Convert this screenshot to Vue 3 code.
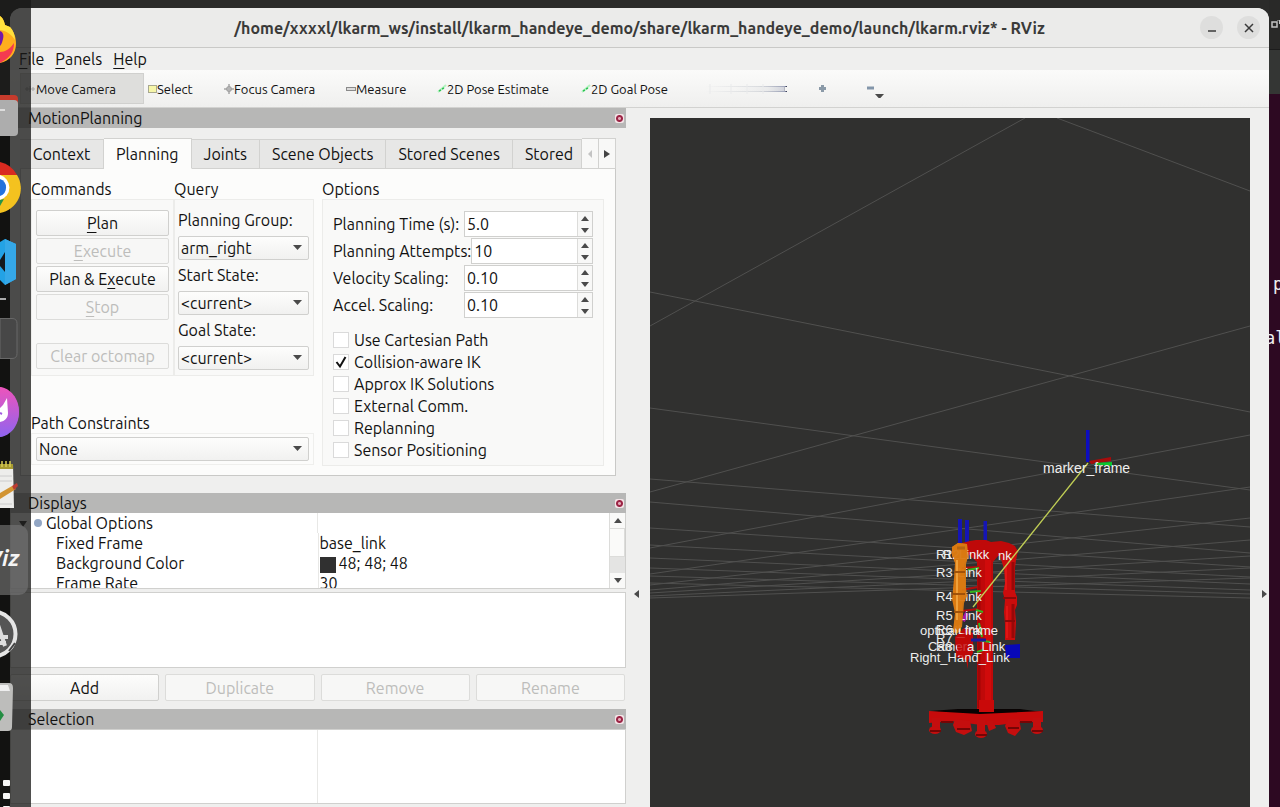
<script setup>
import { ref } from 'vue'

const tools = ['Move Camera', 'Select', 'Focus Camera', 'Measure', '2D Pose Estimate', '2D Goal Pose']
const tabs = ['Context', 'Planning', 'Joints', 'Scene Objects', 'Stored Scenes', 'Stored']
const apps = ['Firefox', 'Files', 'Chrome', 'Code', 'Terminal', 'Cat', 'Notes', 'RViz', 'Updater', 'Trash', 'Show apps']
const options = ref([
  { id: 'time', label: 'Planning Time (s):', value: '5.0' },
  { id: 'attempts', label: 'Planning Attempts:', value: '10' },
  { id: 'velocity', label: 'Velocity Scaling:', value: '0.10' },
  { id: 'accel', label: 'Accel. Scaling:', value: '0.10' }
])
const checks = ref([
  { label: 'Use Cartesian Path', on: false },
  { label: 'Collision-aware IK', on: true },
  { label: 'Approx IK Solutions', on: false },
  { label: 'External Comm.', on: false },
  { label: 'Replanning', on: false },
  { label: 'Sensor Positioning', on: false }
])
const queries = [
  { id: 'group', label: 'Planning Group:', value: 'arm_right' },
  { id: 'start', label: 'Start State:', value: '<current>' },
  { id: 'goal', label: 'Goal State:', value: '<current>' }
]
const gridLines = [
  [650, 326, 1025, 118], [1057, 118, 1250, 191],
  [650, 292, 1250, 412], [650, 408, 1250, 490], [650, 479, 1250, 527], [650, 502, 1250, 553],
  [650, 528, 1250, 567], [650, 545, 1250, 577], [650, 558, 1250, 584], [650, 568, 1250, 590],
  [650, 576, 1250, 594], [650, 583, 1250, 598],
  [650, 492, 1250, 326], [650, 548, 1250, 435], [650, 574, 1250, 487], [650, 585, 1250, 518],
  [650, 590, 1250, 540], [650, 593, 1250, 556], [650, 596, 1250, 568], [650, 598, 1250, 578]
]
</script>

<template>
  <div class="desktop">
    <div class="window">
      <header class="titlebar">
        <h1>/home/xxxxl/lkarm_ws/install/lkarm_handeye_demo/share/lkarm_handeye_demo/launch/lkarm.rviz* - RViz</h1>
        <div class="wm">
          <button aria-label="Minimize"><svg width="10" height="10"><path d="M1 8h8" stroke="#3a3a3a" stroke-width="1.3" /></svg></button>
          <button aria-label="Close"><svg width="10" height="10"><path d="M1 1l8 8M9 1l-8 8" stroke="#3a3a3a" stroke-width="1.5" /></svg></button>
        </div>
      </header>

      <nav class="menubar">
        <button><u>F</u>ile</button>
        <button><u>P</u>anels</button>
        <button><u>H</u>elp</button>
      </nav>

      <div class="toolbar">
        <button v-for="(t, i) in tools" :key="t" :class="['tool', { checked: i === 0 }]">
          <svg v-if="i === 0" width="12" height="12"><path d="M1 6h10M6 3v6M3 4v4M9 4v4" stroke="#a5a5a5" fill="none" /></svg>
          <svg v-else-if="i === 1" width="9" height="12"><rect x=".5" y="2.5" width="8" height="7" fill="#f6f6a8" stroke="#a8a890" /></svg>
          <svg v-else-if="i === 2" width="10" height="12"><path d="M5 1v10M0 6h10" stroke="#a5a5a5" stroke-width="1.5" /><circle cx="5" cy="6" r="2.5" fill="#b5b5b5" stroke="#a0a0a0" /></svg>
          <svg v-else-if="i === 3" width="10" height="12"><rect x=".5" y="4.5" width="9" height="3" fill="#ddd" stroke="#8a8a8a" /></svg>
          <svg v-else width="10" height="12"><path d="M1 9l8-7" stroke="#b4f3c0" stroke-width="2" /><path d="M2 8l2-1M5 6l2-1" stroke="#2fc356" stroke-width="1.5" /></svg>
          <span>{{ t }}</span>
        </button>
        <svg class="slim" width="84" height="14" aria-hidden="true">
          <defs>
            <linearGradient id="fade"><stop offset="0" stop-color="#8890a0" stop-opacity="0" /><stop offset=".65" stop-color="#8890a0" stop-opacity=".25" /><stop offset=".97" stop-color="#7880a0" stop-opacity=".7" /><stop offset="1" stop-color="#202440" /></linearGradient>
          </defs>
          <rect x="0" y="4" width="82" height="1" fill="url(#fade)" /><rect x="30" y="5" width="50" height="4" fill="url(#fade)" opacity=".4" /><rect x="0" y="9" width="82" height="1" fill="url(#fade)" />
          <path d="M5 2v10M26 2v10M42 2v10M58 2v10" stroke="#e9eaeb" />
        </svg>
        <button class="mini" aria-label="Add tool"><svg width="9" height="9"><path d="M4.500 1v7M1 4.500h7" stroke="#8b9aa8" stroke-width="3" /></svg></button>
        <button class="mini" aria-label="Remove tool"><svg width="19" height="18"><path d="M1 8h7" stroke="#8396aa" stroke-width="3" /><path d="M9 14h9l-4.500 5z" fill="#4a4a4a" /></svg></button>
      </div>

      <main class="body">
        <section class="left">
          <div class="dock-title"><span>MotionPlanning</span><button class="shut" aria-label="Close MotionPlanning"></button></div>
          <div class="motion">
            <div class="tabs" role="tablist">
              <button v-for="t in tabs" :key="t" role="tab" :class="['tab', { on: t === 'Planning' }]">{{ t }}</button>
              <button class="scroll off" aria-label="Previous tabs"><svg width="6" height="10"><path d="M5 1v8L1 5z" fill="#c4c4c4" /></svg></button>
              <button class="scroll" aria-label="Next tabs"><svg width="6" height="10"><path d="M0 1v8l6-4z" fill="#444" /></svg></button>
            </div>
            <div class="page">
              <fieldset class="commands">
                <legend>Commands</legend>
                <div class="group stack">
                  <button class="btn"><span><u>P</u>lan</span></button>
                  <button class="btn" disabled><span><u>E</u>xecute</span></button>
                  <button class="btn"><span>Plan &amp; E<u>x</u>ecute</span></button>
                  <button class="btn" disabled><span><u>S</u>top</span></button>
                  <button class="btn clear" disabled>Clear octomap</button>
                </div>
              </fieldset>
              <fieldset class="query">
                <legend>Query</legend>
                <div class="group">
                  <div v-for="q in queries" :key="q.id" class="field">
                    <label :for="q.id">{{ q.label }}</label>
                    <div class="combo">
                      <select :id="q.id"><option>{{ q.value }}</option></select>
                      <svg width="9" height="6"><path d="M0 0h9l-4.500 5z" fill="#4a4a4a" /></svg>
                    </div>
                  </div>
                </div>
              </fieldset>
              <div class="path">
                <label for="path">Path Constraints</label>
                <div class="combo-box">
                  <div class="combo">
                    <select id="path"><option>None</option></select>
                    <svg width="9" height="6"><path d="M0 0h9l-4.500 5z" fill="#4a4a4a" /></svg>
                  </div>
                </div>
              </div>
              <fieldset class="options">
                <legend>Options</legend>
                <div class="group">
                  <div v-for="o in options" :key="o.id" class="row">
                    <label :for="o.id">{{ o.label }}</label>
                    <div class="spin">
                      <input :id="o.id" v-model="o.value" type="text">
                      <div class="steps">
                        <button :aria-label="'Increase ' + o.label"><svg width="8" height="5"><path d="M0 5h8L4 0z" fill="#4a4a4a" /></svg></button>
                        <button :aria-label="'Decrease ' + o.label"><svg width="8" height="5"><path d="M0 0h8L4 5z" fill="#4a4a4a" /></svg></button>
                      </div>
                    </div>
                  </div>
                  <div class="checks">
                    <label v-for="c in checks" :key="c.label">
                      <input v-model="c.on" type="checkbox">
                      <svg width="16" height="16"><rect x=".5" y=".5" width="15" height="15" fill="#fff" stroke="#dadada" /><path v-if="c.on" d="M3.500 8l3.500 4.500L12.500 3" fill="none" stroke="#111" stroke-width="2" /></svg>
                      <span>{{ c.label }}</span>
                    </label>
                  </div>
                </div>
              </fieldset>
            </div>
          </div>

          <div class="dock-title"><span>Displays</span><button class="shut" aria-label="Close Displays"></button></div>
          <div class="tree">
            <table>
              <colgroup><col class="name"><col></colgroup>
              <tbody>
                <tr><td class="root"><svg width="28" height="12"><path d="M1 4h8L5 10z" fill="#333" /><circle cx="20" cy="6" r="4" fill="#92a6c4" /></svg>Global Options</td><td></td></tr>
                <tr><td>Fixed Frame</td><td>base_link</td></tr>
                <tr><td>Background Color</td><td><i class="swatch"></i>48; 48; 48</td></tr>
                <tr><td>Frame Rate</td><td>30</td></tr>
              </tbody>
            </table>
            <div class="vbar">
              <button aria-label="Scroll up"><svg width="8" height="5"><path d="M0 5h8L4 0z" fill="#4a4a4a" /></svg></button>
              <div class="thumb"></div>
              <button aria-label="Scroll down"><svg width="8" height="5"><path d="M0 0h8L4 5z" fill="#4a4a4a" /></svg></button>
            </div>
          </div>
          <div class="desc"></div>
          <div class="actions">
            <button class="btn">Add</button>
            <button class="btn" disabled>Duplicate</button>
            <button class="btn" disabled>Remove</button>
            <button class="btn" disabled>Rename</button>
          </div>

          <div class="dock-title"><span>Selection</span><button class="shut" aria-label="Close Selection"></button></div>
          <div class="selection"><div></div><div></div></div>
        </section>

        <button class="splitter" aria-label="Collapse left panel"><svg width="5" height="8"><path d="M5 0v8L0 4z" fill="#4a4a4a" /></svg></button>

        <div class="view">
          <svg viewBox="650 118 600 689" preserveAspectRatio="xMidYMin slice">
            <g stroke="#50504f" stroke-width="1">
              <line v-for="(l, i) in gridLines" :key="i" :x1="l[0]" :y1="l[1]" :x2="l[2]" :y2="l[3]" />
            </g>
            <g fill="#1515b5">
              <rect x="958" y="519" width="4" height="24" /><rect x="965" y="520" width="4" height="23" /><rect x="983.500" y="521" width="3.500" height="22" />
              <path d="M1005 645l15-1v14h-14z" fill="#0808b8" />
            </g>
            <!-- left arm -->
            <path d="M1000 547l14-1 4 5-2 9-1 8v24l2 5v8l-2 5 1 12-1 18h-10l0-16-1-12 1-12-2-7 2-10-1-14-3-10z" fill="#cb0c0c" />
            <path d="M1006 566v24M1007 606v32" stroke="#e01515" stroke-width="2" />
            <path d="M1013 562v28M1013 604v34" stroke="#980808" stroke-width="3" />
            <path d="M1003 598h13M1005 621h10" stroke="#8b0808" stroke-width="2" />
            <!-- torso and column -->
            <path d="M962 543l8-2 6-1h10l5 2 10-1 8 2 6 3 3 6-6 6-14-2-5 6v148h-16v-148l-9-8-8-6z" fill="#bf0909" />
            <path d="M979 568v140" stroke="#a00606" stroke-width="3" />
            <path d="M988 560v150" stroke="#d00b0b" stroke-width="6" />
            <!-- right arm -->
            <path d="M952 547l6-4 9 1 1 13-4 7 1 24 1 8-4 7-1 28-5 3-3-3 2-18-3-14 2-20 1-16-3-7z" fill="#d97912" />
            <path d="M955 637l9-9 9 5v20l-5 8v8l-2-9-10-3z" fill="#bd0808" />
            <g stroke="#b00d0d" stroke-width="2"><path d="M962 568l16-1M962 590l16-3M962 611l16-2M962 630l16-1" /></g>
            <g stroke="#33b51f" stroke-width="2"><path d="M968 570l11-2M970 592l11-1M976 610l7 2M979 623l3 14M978 640l12 2M977 652l6-2" /></g>
            <path d="M967 613l-4 8" stroke="#a517a5" stroke-width="4" />
            <path d="M971 640h15" stroke="#1a1a9d" stroke-width="3" />
            <!-- base -->
            <path d="M930 711l28-2h62l22 3-60 5z" fill="#080202" />
            <path d="M929 711l51 3 63-3v11l-22 0-22 3h-18l-30-4-22 2z" fill="#c70b0b" />
            <path d="M979 700h15v12h-15z" fill="#c90909" />
            <g fill="#c40e0e">
              <rect x="932" y="718" width="8" height="12" /><ellipse cx="935" cy="730" rx="6" ry="4" />
              <rect x="1033" y="718" width="8" height="12" /><ellipse cx="1037" cy="730" rx="6" ry="4" />
              <rect x="977" y="720" width="8" height="13" /><ellipse cx="981" cy="734" rx="6" ry="4" />
              <path d="M955 719l15 2 2 10-8 4-8-3-3-7zM1008 719l11 0 2 10-6 7-7-3-3-7zM986 721h7l3 7-7 3z" />
            </g>
            <path d="M930 731h11M1032 731h11M976 735h11M957 729h13M1008 728h11M941 722h12M1020 722h12" stroke="#750505" stroke-width="2" />
            <path d="M973 607L1088 463" stroke="#c1cf55" stroke-width="1.300" />
            <rect x="1086" y="430" width="3.500" height="32" fill="#0d0dc0" />
            <path d="M1089 461l22-4v4l-20 3z" fill="#a80c0c" /><path d="M1094 463l18-1v4l-14-1z" fill="#0cc52c" />
            <g class="frames">
              <text x="1043" y="473" class="marker">marker_frame</text>
              <text x="936" y="559">R1</text><text x="943" y="559">R2</text>
              <text x="959" y="559">Linkk</text><text x="998" y="560">nk</text>
              <text x="936" y="577">R3</text><text x="958" y="577">Link</text>
              <text x="936" y="601">R4</text><text x="958" y="601">Link</text>
              <text x="936" y="620">R5</text><text x="958" y="620">Link</text>
              <text x="936" y="634">R6</text><text x="936" y="643">R7</text><text x="958" y="634">Link</text>
              <text x="920" y="635">optical_frame</text>
              <text x="936" y="651">R8</text><text x="928" y="651">Camera_Link</text>
              <text x="910" y="662">Right_Hand_Link</text>
            </g>
            <path d="M952 547l6-4 9 1 1 13-2 7v24l1 8-3 7-2 24-5 3-3-3 2-14-3-14 2-20 1-16-3-7z" fill="#d97912" opacity=".95" />
            <path d="M957 560v60" stroke="#efa03a" stroke-width="2" />
            <path d="M954 572h11M953 594h12M954 612h9" stroke="#a05209" stroke-width="2" />
            <path d="M957 548h8" stroke="#b56510" stroke-width="3" />
            <path d="M957 635l8-2 3 9-3 16-5-1-3-9z" fill="#c00808" opacity=".8" />
          </svg>
        </div>
        <button class="splitter right" aria-label="Collapse right panel"><svg width="5" height="8"><path d="M0 0v8l5-4z" fill="#4a4a4a" /></svg></button>
      </main>
    </div>

    <aside class="terminal">
      <div class="termbar"><svg width="11" height="9"><rect x="3" y="2" width="5" height="5" fill="none" stroke="#c4c4c4" stroke-width="1.500" /><path d="M8 0h3M10.500 0v4" stroke="#c4c4c4" /></svg></div>
      <div class="termtabs"></div>
      <pre><span>p</span>
<span>al</span></pre>
    </aside>

    <nav class="launcher" aria-label="Applications">
      <button v-for="(a, i) in apps" :key="a" :aria-label="a">
        <svg width="31" height="75" viewBox="0 0 31 75">
          <g v-if="i === 0">
            <path d="M0 16c2 1 4 4 5 9l5 2c4 5 6 10 6 17 0 9-6 17-16 19z" fill="#ffae1d" />
            <path d="M0 16c2 1 4 4 5 9l5 2c3 3 5 8 5 13-3-5-8-9-15-10z" fill="#ffe03d" />
            <path d="M0 52c5 0 10-3 14-9 0 9-4 15-14 20z" fill="#f43a50" />
            <path d="M0 31c3 1 4 4 3 8-1 4-2 6-3 7z" fill="#7418a8" />
          </g>
          <g v-else-if="i === 1">
            <path d="M0 20h14q4 0 4 4v8H0z" fill="#c63b2c" /><path d="M0 25h14q4 0 4 4v28q0 4-4 4H0z" fill="#adadad" /><path d="M0 35h5" stroke="#ddd" stroke-width="2" />
          </g>
          <g v-else-if="i === 2">
            <path d="M0 12a25 25 0 0 1 17 13L0 26z" fill="#d92a20" /><path d="M0 25h17a25 25 0 0 1-17 38z" fill="#f4c21f" /><path d="M0 25a13 13 0 0 1 0 25z" fill="#fff" /><path d="M0 29a9 9 0 0 1 0 17z" fill="#2372dc" /><path d="M0 50l4-1L0 56z" fill="#249448" />
          </g>
          <g v-else-if="i === 3">
            <path d="M0 17l5-3 11 5v35L5 60l-5-5z" fill="#23a2e5" /><path d="M0 35l5-8v20l-5-6z" fill="#15191c" /><path d="M5 14l11 5v35L5 60z" fill="#35a8e8" /><path d="M0 74h6" stroke="#aaa" stroke-width="2" />
          </g>
          <g v-else-if="i === 4"><path d="M0 18.500h12q5 0 5 5v30q0 5-5 5H0z" fill="#474747" stroke="#686868" /></g>
          <g v-else-if="i === 5">
            <defs><linearGradient id="pink" x2="0" y2="1"><stop stop-color="#ed54bb" /><stop offset="1" stop-color="#8f64f0" /></linearGradient></defs>
            <path d="M0 12a26 26 0 0 1 0 50z" fill="#b85ce0" /><path d="M0 12c10 1 19 11 19 25S10 61 0 62z" fill="url(#pink)" /><path d="M0 33l3-3 4-7 1 15c0 5-3 8-8 9z" fill="#fff" /><path d="M0 38l2 1" stroke="#a05ae0" stroke-width="2" />
          </g>
          <g v-else-if="i === 6">
            <path d="M0 14h13l1 44H0z" fill="#ededeb" /><path d="M0 14h13v5H0z" fill="#a79b32" /><path d="M2 11v6M6 11v6M10 11v6" stroke="#d8cd55" stroke-width="1.500" /><path d="M0 26h12M0 31h12M0 54h12" stroke="#ccc" /><path d="M0 43l12-7 4 3L0 49z" fill="#d29432" /><path d="M12 36l5-3 1 3-4 4z" fill="#b93b32" />
          </g>
          <g v-else-if="i === 7"><rect x="-10" y="0" width="38" height="70" rx="9" fill="#737373" opacity=".65" /><text x="-13" y="41" class="viz">Viz</text></g>
          <g v-else-if="i === 8"><circle cx="-7" cy="34" r="22.500" fill="#555" stroke="#e5e5e5" stroke-width="4" /><path d="M-9 42L-3 22 5 46M-8 37H8M0 43h6" fill="none" stroke="#ddd" stroke-width="4" /><path d="M9 51l6-8" stroke="#444" stroke-width="2" /></g>
          <g v-else-if="i === 9"><path d="M0 8h9q4 0 4 5l-1 39q0 4-4 4H0z" fill="#bdbdbb" /><path d="M0 10h8l2 6H0z" fill="#eee" /><path d="M0 35l4 5-4 6z" fill="#238d42" /></g>
          <g v-else fill="#f4f4f4"><rect x="3" y="30" width="7" height="6" rx="1" /><rect x="3" y="43" width="7" height="6" rx="1" /><rect x="3" y="56" width="7" height="6" rx="1" /></g>
        </svg>
      </button>
    </nav>
  </div>
</template>

<style>
body { margin: 0; background: #121211; }
</style>

<style scoped>
* { box-sizing: border-box; }
.desktop { position: relative; display: grid; grid-template-columns: minmax(0, 1fr) 11px; height: 100vh; padding-left: 10px; overflow: hidden; background: linear-gradient(#2b2b2a 130px, #000 130px); font: 16px/20px Ubuntu, "Noto Sans", sans-serif; color: #111; }
button, input, select { font: inherit; color: inherit; margin: 0; padding: 0; border: 0; background: none; border-radius: 0; }
button { display: flex; align-items: center; justify-content: center; }
svg { display: block; flex: none; }
u { text-underline-offset: 3px; }
.window { display: flex; flex-direction: column; min-width: 0; min-height: 0; margin-top: 8px; border-radius: 12px 12px 0 0; overflow: hidden; background: #efefee; }
.titlebar { position: relative; display: flex; align-items: center; justify-content: center; height: 40px; flex: none; border-bottom: 1px solid #c9c9c7; background: #ebebea; }
h1 { margin: 0; font-size: 16px; line-height: 24px; font-weight: 700; color: #3a3a39; white-space: nowrap; }
.wm { position: absolute; right: 9px; top: 8px; display: flex; gap: 14px; }
.wm button { width: 23px; height: 23px; border-radius: 50%; background: #dededd; }
.menubar { display: flex; gap: 11px; height: 22px; flex: none; padding-left: 9px; }
.toolbar { display: grid; grid-template-columns: 124px 76px 122px 91px 144px 124px 98px 46px 60px; align-items: center; height: 38px; flex: none; padding-left: 10px; border-bottom: 1px solid #d2d2d0; background: linear-gradient(#fbfbfa, #efefee); font-size: 13px; }
.tool { justify-content: flex-start; height: 31px; padding-left: 4px; white-space: nowrap; }
.checked { padding-left: 3px; border: 1px solid #d0d0ce; background: #dededc; }
.slim { margin-left: 4px; }
.body { display: grid; grid-template-columns: 616px 24px minmax(0, 1fr) 19px; flex: 1; min-height: 0; }
.left { display: flex; flex-direction: column; min-height: 0; }
.dock-title { display: flex; align-items: center; justify-content: space-between; height: 20px; flex: none; padding: 0 2px 0 18px; background: #b7b7b6; }
.shut { width: 9px; height: 9px; border-radius: 2px; background: radial-gradient(circle, #e3a9b6 1px, #9c2445 2px, #9c2445 3px, #f3e4e7 4px); }
.motion { padding: 10px 10px 17px; }
.tabs { display: flex; align-items: flex-end; height: 31px; overflow: hidden; }
.tab { height: 30px; flex: none; border: 1px solid #d2d2d0; border-left: 0; background: #e7e7e6; padding: 0 12px; white-space: nowrap; }
.tab:first-child { width: 84px; }
.tab.on { height: 31px; background: #fcfcfb; border-bottom-color: #fcfcfb; }
.tab:nth-child(6) { flex: 1 1 0; min-width: 0; padding-right: 0; justify-content: flex-start; overflow: hidden; }
.scroll { width: 17px; height: 31px; flex: none; border: 1px solid #d2d2d0; border-left: 0; background: #f8f8f7; }
.page { display: grid; grid-template-columns: 143px 140px minmax(0, 1fr); grid-template-rows: 238px auto; padding: 10px 11px 9px 10px; border: 1px solid #c9c9c7; border-top: 0; background: #fcfcfb; }
fieldset { margin: 0; padding: 0; border: 0; min-width: 0; }
legend { padding: 0; height: 20px; }
.group { border: 1px solid #ececea; background: #f9f9f8; }
.stack { display: flex; flex-direction: column; gap: 2px; height: 177px; padding: 10px 4px 0; }
.btn { height: 26px; border: 1px solid #d0d0ce; border-radius: 2px; background: linear-gradient(#fdfdfc, #f1f1f0); white-space: nowrap; }
.btn:disabled { color: #bdbdbb; border-color: #dcdcda; background: #f7f7f6; }
.clear { margin-top: 21px; }
.query .group { height: 177px; padding: 10px 4px 0 3px; }
.field { height: 55px; }
.field label { display: block; height: 26px; }
.combo { position: relative; height: 24px; }
.combo select { width: 100%; height: 24px; padding: 0 20px 0 2px; appearance: none; border: 1px solid #d0d0ce; border-radius: 2px; background: linear-gradient(#fdfdfc, #f1f1f0); }
.combo svg { position: absolute; right: 7px; top: 9px; pointer-events: none; }
.path { grid-column: 1 / 3; grid-row: 2; }
.path label { display: block; height: 20px; margin-top: -4px; }
.combo-box { padding: 3px 4px; border: 1px solid #efefed; }
.options { grid-column: 3; grid-row: 1 / 3; margin-left: 8px; }
.options .group { padding: 11px 10px 4px; }
.row { display: flex; align-items: center; height: 26px; margin-bottom: 1px; }
.row label { min-width: 131px; white-space: nowrap; }
.spin { display: flex; flex: 1; min-width: 0; height: 26px; border: 1px solid #d0d0ce; background: #fff; }
.spin input { flex: 1; width: 0; min-width: 0; padding: 0 2px; }
.steps { display: flex; flex-direction: column; width: 15px; border-left: 1px solid #dcdcda; background: #f8f8f7; }
.steps button { flex: 1; }
.checks { padding-top: 10px; }
.checks label { position: relative; display: flex; align-items: center; gap: 5px; height: 22px; }
.checks input { position: absolute; opacity: 0; width: 16px; height: 16px; }
.tree { display: flex; height: 76px; flex: none; overflow: hidden; border: 1px solid #d0d0ce; border-top: 0; background: #fff; }
table { flex: 1; border-collapse: collapse; table-layout: fixed; height: 80px; }
.name { width: 307px; }
td { height: 20px; padding: 0 0 0 1px; line-height: 20px; white-space: nowrap; }
td:first-child { padding-left: 45px; border-right: 1px solid #e8e8e6; }
td.root { display: flex; align-items: center; padding-left: 7px; }
.swatch { display: inline-block; width: 16px; height: 16px; margin-right: 3px; vertical-align: middle; background: #303030; }
.vbar { display: flex; flex-direction: column; width: 16px; border-left: 1px solid #dcdcda; background: #e4e4e3; }
.vbar button { height: 15px; background: #f9f9f8; }
.thumb { height: 29px; margin-bottom: auto; border: 1px solid #dcdcda; border-left: 0; background: #fafaf9; }
.desc { height: 76px; flex: none; margin-top: 3px; border: 1px solid #d0d0ce; background: #fff; }
.actions { display: grid; grid-template-columns: repeat(4, 1fr); gap: 6px; padding: 6px 1px 8px 0; }
.actions .btn { height: 27px; }
.selection { display: grid; grid-template-columns: 307px 1fr; height: 75px; flex: none; border: 1px solid #d0d0ce; background: #fff; }
.selection div:first-child { border-right: 1px solid #e8e8e6; }
.splitter { justify-content: flex-start; padding: 272px 0 0 8px; }
.splitter.right { padding-left: 12px; }
.view { min-width: 0; min-height: 0; margin-top: 10px; background: #30302f; overflow: hidden; }
.view svg { width: 100%; height: 100%; }
.frames { font: 13px "Liberation Sans", sans-serif; fill: #eee; }
.marker { font-size: 14px; }
.terminal { min-width: 0; overflow: hidden; background: #2d0922; color: #eee; }
.termbar { height: 49px; padding-top: 20px; background: #292928; }
.termtabs { height: 45px; background: #343634; border-top: 1px solid #1c1c1c; }
pre { margin: 0; padding-top: 177px; font: 17px/27px "DejaVu Sans Mono", monospace; }
pre span { display: block; padding-left: 4px; }
pre span + span { margin-left: -8px; }
.launcher { position: absolute; left: 0; top: 0; bottom: 0; width: 31px; overflow: hidden; background: rgba(24, 24, 23, .76); }
.launcher button { width: 31px; height: 75px; }
.viz { font: italic 700 22px Ubuntu, "Noto Sans", sans-serif; fill: #f4f4f4; }
</style>
